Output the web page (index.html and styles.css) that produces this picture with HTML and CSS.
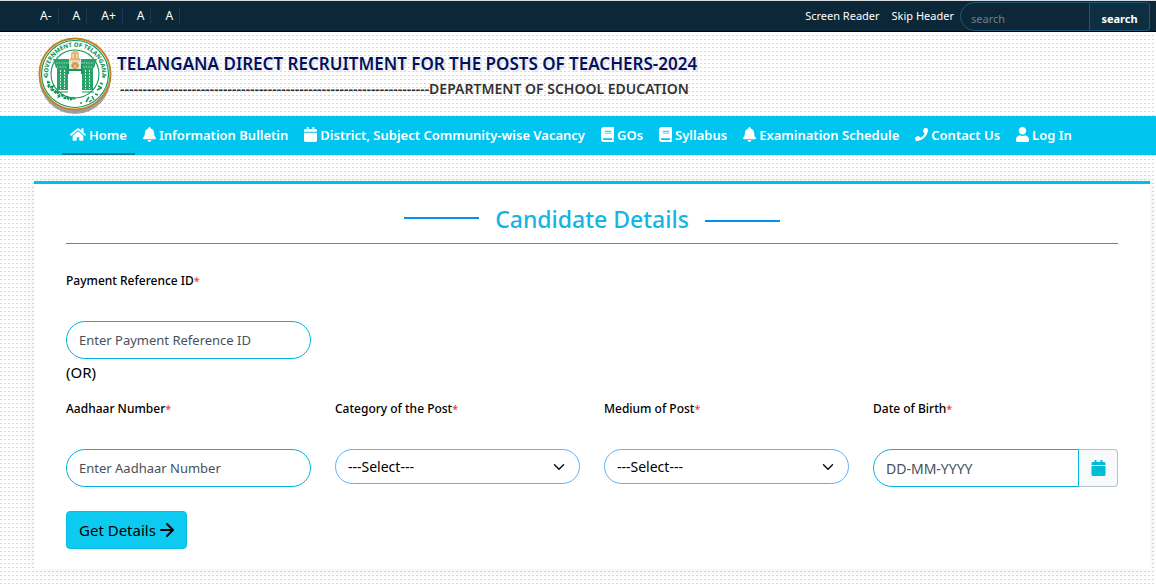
FILE: index.html
```html
<!DOCTYPE html>
<html lang="en">
<head>
    <meta charset="UTF-8">
    <meta name="viewport" content="width=device-width, initial-scale=1.0">
    <title>Telangana Direct Recruitment for the Posts of Teachers-2024</title>
    <link rel="stylesheet" href="styles.css">
</head>
<body>
    <!-- icon sprite -->
    <svg class="sprite" aria-hidden="true">
        <symbol id="i-home" viewBox="0 0 576 512"><path d="M280.37 148.26L96 300.11V464a16 16 0 0 0 16 16l112.06-.29a16 16 0 0 0 15.92-16V368a16 16 0 0 1 16-16h64a16 16 0 0 1 16 16v95.64a16 16 0 0 0 16 16.05L464 480a16 16 0 0 0 16-16V300L295.67 148.26a12.19 12.19 0 0 0-15.3 0zM571.6 251.47L488 182.56V44.05a12 12 0 0 0-12-12h-56a12 12 0 0 0-12 12v72.61L318.47 43a48 48 0 0 0-61 0L4.34 251.47a12 12 0 0 0-1.6 16.9l25.5 31A12 12 0 0 0 45.15 301l235.22-193.74a12.19 12.19 0 0 1 15.3 0L530.9 301a12 12 0 0 0 16.9-1.6l25.5-31a12 12 0 0 0-1.7-16.93z"/></symbol>
        <symbol id="i-bell" viewBox="0 0 448 512"><path d="M224 512c35.32 0 63.97-28.65 63.97-64H160.03c0 35.35 28.65 64 63.97 64zm215.39-149.71c-19.32-20.76-55.47-51.99-55.47-154.29 0-77.7-54.48-139.9-127.94-155.16V32c0-17.67-14.32-32-31.98-32s-31.98 14.33-31.98 32v20.84C118.56 68.1 64.08 130.3 64.08 208c0 102.3-36.15 133.53-55.47 154.29-6 6.45-8.66 14.16-8.61 21.71.11 16.4 12.98 32 32.1 32h383.8c19.12 0 32-15.6 32.1-32 .05-7.55-2.61-15.27-8.61-21.71z"/></symbol>
        <symbol id="i-calendar" viewBox="0 0 448 512"><path d="M12 192h424c6.6 0 12 5.4 12 12v260c0 26.5-21.5 48-48 48H48c-26.5 0-48-21.5-48-48V204c0-6.6 5.4-12 12-12zm436-44v-36c0-26.5-21.5-48-48-48h-48V12c0-6.6-5.4-12-12-12h-40c-6.6 0-12 5.4-12 12v52H160V12c0-6.6-5.4-12-12-12h-40c-6.6 0-12 5.4-12 12v52H48C21.5 64 0 85.5 0 112v36c0 6.6 5.4 12 12 12h424c6.6 0 12-5.4 12-12z"/></symbol>
        <symbol id="i-book" viewBox="0 0 448 512"><path d="M448 360V24c0-13.3-10.7-24-24-24H96C43 0 0 43 0 96v320c0 53 43 96 96 96h328c13.3 0 24-10.7 24-24v-16c0-7.5-3.5-14.3-8.9-18.7-4.2-15.4-4.2-59.3 0-74.7 5.4-4.3 8.9-11.1 8.9-18.6zM128 134c0-3.3 2.7-6 6-6h212c3.3 0 6 2.7 6 6v20c0 3.3-2.7 6-6 6H134c-3.3 0-6-2.7-6-6v-20zm0 64c0-3.3 2.7-6 6-6h212c3.3 0 6 2.7 6 6v20c0 3.3-2.7 6-6 6H134c-3.3 0-6-2.7-6-6v-20zm253.4 250H96c-17.7 0-32-14.3-32-32 0-17.6 14.4-32 32-32h285.4c-1.9 17.1-1.9 46.9 0 64z"/></symbol>
        <symbol id="i-phone" viewBox="0 0 512 512"><path d="M493.4 24.6l-104-24c-11.3-2.6-22.9 3.3-27.5 13.9l-48 112c-4.2 9.8-1.4 21.3 6.9 28l60.6 49.6c-36 76.7-98.9 140.5-177.2 177.2l-49.6-60.6c-6.8-8.3-18.2-11.1-28-6.9l-112 48C3.9 366.5-2 378.1.6 389.4l24 104C27.1 504.2 36.7 512 48 512c256.1 0 464-207.5 464-464 0-11.2-7.7-20.9-18.6-23.4z"/></symbol>
        <symbol id="i-user" viewBox="0 0 448 512"><path d="M224 256c70.7 0 128-57.3 128-128S294.7 0 224 0 96 57.3 96 128s57.3 128 128 128zm89.6 32h-16.7c-22.2 10.2-46.9 16-72.9 16s-50.6-5.8-72.9-16h-16.7C60.2 288 0 348.2 0 422.4V464c0 26.5 21.5 48 48 48h352c26.5 0 48-21.5 48-48v-41.6c0-74.2-60.2-134.4-134.4-134.4z"/></symbol>
    </svg>

    <div class="topbar">
        <div class="font-tools">
            <button type="button">A-</button>
            <button type="button">A</button>
            <button type="button">A+</button>
            <button type="button">A</button>
            <button type="button">A</button>
        </div>
        <div class="top-links">
            <a href="#main">Screen Reader</a>
            <a href="#main">Skip Header</a>
        </div>
        <form class="search">
            <input type="text" placeholder="search" aria-label="search">
            <button type="button">search</button>
        </form>
    </div>

    <header class="header">
        <svg class="emblem" viewBox="0 0 76 80" role="img" aria-label="Government of Telangana">
            <defs>
                <path id="ring-top" d="M12.3 46A27 27 0 1 1 63.7 46"/>
            </defs>
            <ellipse cx="38" cy="41" rx="36" ry="37" fill="#777" opacity=".7"/>
            <circle cx="38" cy="38" r="35.500" fill="#fff" stroke="#c08326" stroke-width="2"/>
            <circle cx="38" cy="38" r="33.5" fill="none" stroke="#15975a" stroke-width="1.2"/>
            <circle cx="38" cy="38" r="24" fill="#fff" stroke="#15975a" stroke-width="1.1"/>
            <text class="emblem-text"><textPath href="#ring-top" startOffset="50%" text-anchor="middle">GOVERNMENT OF TELANGANA</textPath></text>
            <circle cx="9" cy="41" r="1" fill="#15975a"/>
            <circle cx="67" cy="41" r="1" fill="#15975a"/>
            <path d="M10 46q3 0 2 3t3 2q-2 3 1 3t2 3q2-2 3 0t1 3q3-2 4 0t2 2q2-2 3 0t3 1q2-2 4 0" fill="none" stroke="#15975a" stroke-width="2.600" stroke-dasharray="3 .8"/>
            <circle cx="44" cy="67" r="1" fill="#15975a"/>
            <path d="M49 66l3-5m0 5l3-2m0-4l2 4m1-6l3 1m-1-5l4-2m-3-2l4 2m-2-5l3 1" fill="none" stroke="#15975a" stroke-width="1.500"/>
            <!-- kakatiya arch with charminar in the gate -->
            <path d="M16 23h44l-3 9h-1v22H45V33H31v21H20V32h-1z" fill="#2aa36b"/>
            <path d="M30 28h16v10h-2v-3H32v3h-2z" fill="#15975a"/>
            <path d="M31 56V40l2-2 2 2h6l2-2 2 2v16h-3V47h-8v9z" fill="#fff"/>
            <path d="M23.500 34v19m4-19v19m21-19v19m4-19v19" stroke="#e4f5ec" stroke-width=".9" stroke-dasharray="2 1"/>
            <path d="M19 27h13m12 0h13M20 31h10m16 0h10" stroke="#bfe5d1" stroke-width=".8" stroke-dasharray="1.500 1"/>
            <path d="M19 56h12m14 0h12" stroke="#15975a" stroke-width="1"/>
            <path d="M32 16h12v17H32z" fill="#fff" opacity=".8"/>
            <path d="M34 18q0-3 4-3t4 3v4h1v3h-2v3h1v3h-8v-3h1v-3h-2v-3h1z" fill="#e3b57c"/>
            <circle cx="38" cy="30" r="2.500" fill="none" stroke="#c77a2c" stroke-width="1"/>
            <path d="M36 18v4m4-4v4M34 25h8" stroke="#fff" stroke-width=".8"/>
        </svg>
        <div class="titles">
            <h1>TELANGANA DIRECT RECRUITMENT FOR THE POSTS OF TEACHERS-2024</h1>
            <p>---------------------------------------------------------------------DEPARTMENT OF SCHOOL EDUCATION</p>
        </div>
    </header>

    <nav class="nav">
        <a class="active" href="#"><svg class="icon wide"><use href="#i-home"/></svg>Home</a>
        <a href="#"><svg class="icon"><use href="#i-bell"/></svg>Information Bulletin</a>
        <a href="#"><svg class="icon"><use href="#i-calendar"/></svg>District, Subject Community-wise Vacancy</a>
        <a href="#"><svg class="icon"><use href="#i-book"/></svg>GOs</a>
        <a href="#"><svg class="icon"><use href="#i-book"/></svg>Syllabus</a>
        <a href="#"><svg class="icon"><use href="#i-bell"/></svg>Examination Schedule</a>
        <a href="#"><svg class="icon"><use href="#i-phone"/></svg>Contact Us</a>
        <a href="#"><svg class="icon"><use href="#i-user"/></svg>Log In</a>
    </nav>

    <main class="card" id="main">
        <h2>Candidate Details</h2>
        <form>
            <div class="row">
                <div class="field">
                    <label for="paymentId">Payment Reference ID<span class="req">*</span></label>
                    <input type="text" id="paymentId" placeholder="Enter Payment Reference ID">
                </div>
            </div>
            <div class="or">(OR)</div>
            <div class="row">
                <div class="field">
                    <label for="aadhaar">Aadhaar Number<span class="req">*</span></label>
                    <input type="text" id="aadhaar" placeholder="Enter Aadhaar Number">
                </div>
                <div class="field">
                    <label for="category">Category of the Post<span class="req">*</span></label>
                    <select id="category"><option>---Select---</option></select>
                </div>
                <div class="field">
                    <label for="medium">Medium of Post<span class="req">*</span></label>
                    <select id="medium"><option>---Select---</option></select>
                </div>
                <div class="field">
                    <label for="dob">Date of Birth<span class="req">*</span></label>
                    <div class="date-group">
                        <input type="text" id="dob" placeholder="DD-MM-YYYY">
                        <button type="button" aria-label="Open calendar"><svg class="icon"><use href="#i-calendar"/></svg></button>
                    </div>
                </div>
            </div>
            <button type="button" class="submit">Get Details
                <svg class="arrow" viewBox="0 0 14 14"><path d="M1 7h12M7 1l6 6-6 6"/></svg>
            </button>
        </form>
    </main>
</body>
</html>
```
FILE: styles.css
```css
/* base */
* {
    box-sizing: border-box;
}

body {
    margin: 0;
    font-family: "Noto Sans", "Open Sans", sans-serif;
    font-size: 14px;
    line-height: 20px;
    color: #000;
    /* dotted paper */
    background-color: #fff;
    background-image: linear-gradient(90deg, transparent 2px, #fff 2px), linear-gradient(#fff 3px, #dadada 3px);
    background-size: 4px 4px;
}

button,
input,
select {
    font-family: inherit;
}

.sprite {
    display: none;
}

.icon {
    width: 13px;
    height: 15px;
    fill: currentColor;
    flex: none;
}

.icon.wide {
    width: 16px;
}

/* top bar */
.topbar {
    display: flex;
    align-items: center;
    height: 32px;
    padding: 0 6px 0 34px;
    background: #0c2838;
    border-top: 1px solid #d9dde0;
    border-bottom: 1px solid #000;
}

.font-tools {
    display: flex;
    flex: 1;
}

.font-tools button {
    padding: 0 6px 0 14px;
    background: none;
    border: none;
    border-right: 1px solid #163c52;
    color: #fff;
    font-size: 12px;
    line-height: 16px;
}

.font-tools button:first-child {
    padding-left: 6px;
}

.top-links {
    display: flex;
    gap: 12px;
    margin-right: 6px;
}

.top-links a {
    color: #fff;
    font-size: 11px;
    text-decoration: none;
}

.search {
    display: flex;
    height: 29px;
}

.search input {
    width: 130px;
    padding: 4px 10px 0;
    background: transparent;
    border: 1px solid #1f5877;
    border-radius: 15px 0 0 15px;
    color: #fff;
    font-size: 11px;
}

.search input::placeholder {
    color: #6f7f8b;
}

.search button {
    width: 60px;
    padding: 4px 0 0;
    background: #0e2f42;
    border: 1px solid #1f5877;
    border-left: none;
    border-radius: 0 4px 4px 0;
    color: #fff;
    font-size: 11px;
    font-weight: 700;
}

/* site header */
.header {
    display: flex;
    height: 84px;
    padding: 4px 37px 0;
}

.emblem {
    width: 76px;
    height: 80px;
}

.emblem-text {
    fill: #15975a;
    font-size: 6px;
    font-weight: 800;
}

.titles {
    padding: 16px 0 0 4px;
}

.titles h1 {
    margin: 0;
    color: #02115f;
    font-size: 17px;
    font-weight: 600;
    line-height: 24px;
    text-shadow: 0 0 2px #fff, 2px 2px 2px #ddd;
}

.titles p {
    margin: 0;
    padding-left: 3px;
    color: #333;
    font-size: 14px;
    font-weight: 600;
    line-height: 26px;
    white-space: nowrap;
}

/* navigation */
.nav {
    display: flex;
    height: 39px;
    padding-left: 62px;
    background: #00c5ef;
}

.nav a {
    display: flex;
    align-items: center;
    gap: 3px;
    padding: 0 8px;
    border-bottom: 2px solid transparent;
    color: #fff;
    font-size: 13px;
    font-weight: 600;
    text-decoration: none;
    white-space: nowrap;
}

.nav a.active {
    border-bottom-color: #087f99;
}

/* content card */
.card {
    margin: 26px 6px 16px 34px;
    padding: 20px 32px;
    background: #fff;
    border-top: 3px solid #00c0e8;
    box-shadow: 0 0 12px rgba(0, 0, 0, 0.08);
}

.card h2 {
    display: flex;
    justify-content: center;
    align-items: center;
    gap: 16px;
    height: 40px;
    margin: 0 0 24px;
    padding-bottom: 10px;
    border-bottom: 1px solid #0fa5cf;
    color: #12b5e4;
    font-size: 23px;
    font-weight: 500;
}

.card h2::before,
.card h2::after {
    content: "";
    width: 75px;
    height: 2px;
    background: #0093e9;
}

.card h2::before {
    margin-bottom: 1px;
}

.card h2::after {
    margin-top: 5px;
}

.row {
    display: grid;
    grid-template-columns: repeat(4, 1fr);
    gap: 24px;
}

.field label {
    display: block;
    height: 53px;
    padding-top: 3px;
    font-size: 12px;
    font-weight: 500;
}

.req {
    color: #f33;
    font-size: 11px;
}

.field input,
.field select {
    display: block;
    width: 100%;
    height: 38px;
    padding: 0 12px;
    background: #fff;
    border: 1px solid #00b4e0;
    border-radius: 19px;
    font-size: 13px;
}

.field input::placeholder {
    color: #47505a;
}

.field select {
    appearance: none;
    height: 35px;
    border-color: #5cb3fd;
    border-radius: 18px;
    background: #fff url("data:image/svg+xml,%3Csvg xmlns='http://www.w3.org/2000/svg' viewBox='0 0 16 16'%3E%3Cpath fill='none' stroke='%23111' stroke-linecap='round' stroke-linejoin='round' stroke-width='2' d='m2 5 6 6 6-6'/%3E%3C/svg%3E") no-repeat right 14px center / 12px;
    color: #000;
    font-size: 14px;
}

.date-group {
    display: flex;
}

.field .date-group input {
    flex: 1;
    min-width: 0;
    border-radius: 19px 0 0 19px;
    font-size: 14px;
}

.date-group button {
    display: flex;
    align-items: center;
    justify-content: center;
    width: 39px;
    padding: 0;
    background: #f8f9fa;
    border: 1px solid #b9c1cc;
    border-left: none;
    border-radius: 0 4px 4px 0;
    color: #00bcd9;
}

.date-group .icon {
    width: 15px;
    height: 16px;
}

.or {
    height: 37px;
    padding-top: 3px;
    font-size: 15px;
}

.submit {
    display: flex;
    align-items: center;
    gap: 4px;
    height: 38px;
    margin-top: 24px;
    padding: 0 12px;
    background: #0dcaf0;
    border: 1px solid #08bde4;
    border-radius: 4px;
    color: #000;
    font-size: 15px;
}

.arrow {
    width: 14px;
    height: 14px;
    fill: none;
    stroke: #000;
    stroke-width: 2;
    stroke-linecap: round;
    stroke-linejoin: round;
}

@media (max-width: 768px) {
    .nav {
        flex-wrap: wrap;
        height: auto;
    }

    .row {
        grid-template-columns: 1fr;
    }
}
```
